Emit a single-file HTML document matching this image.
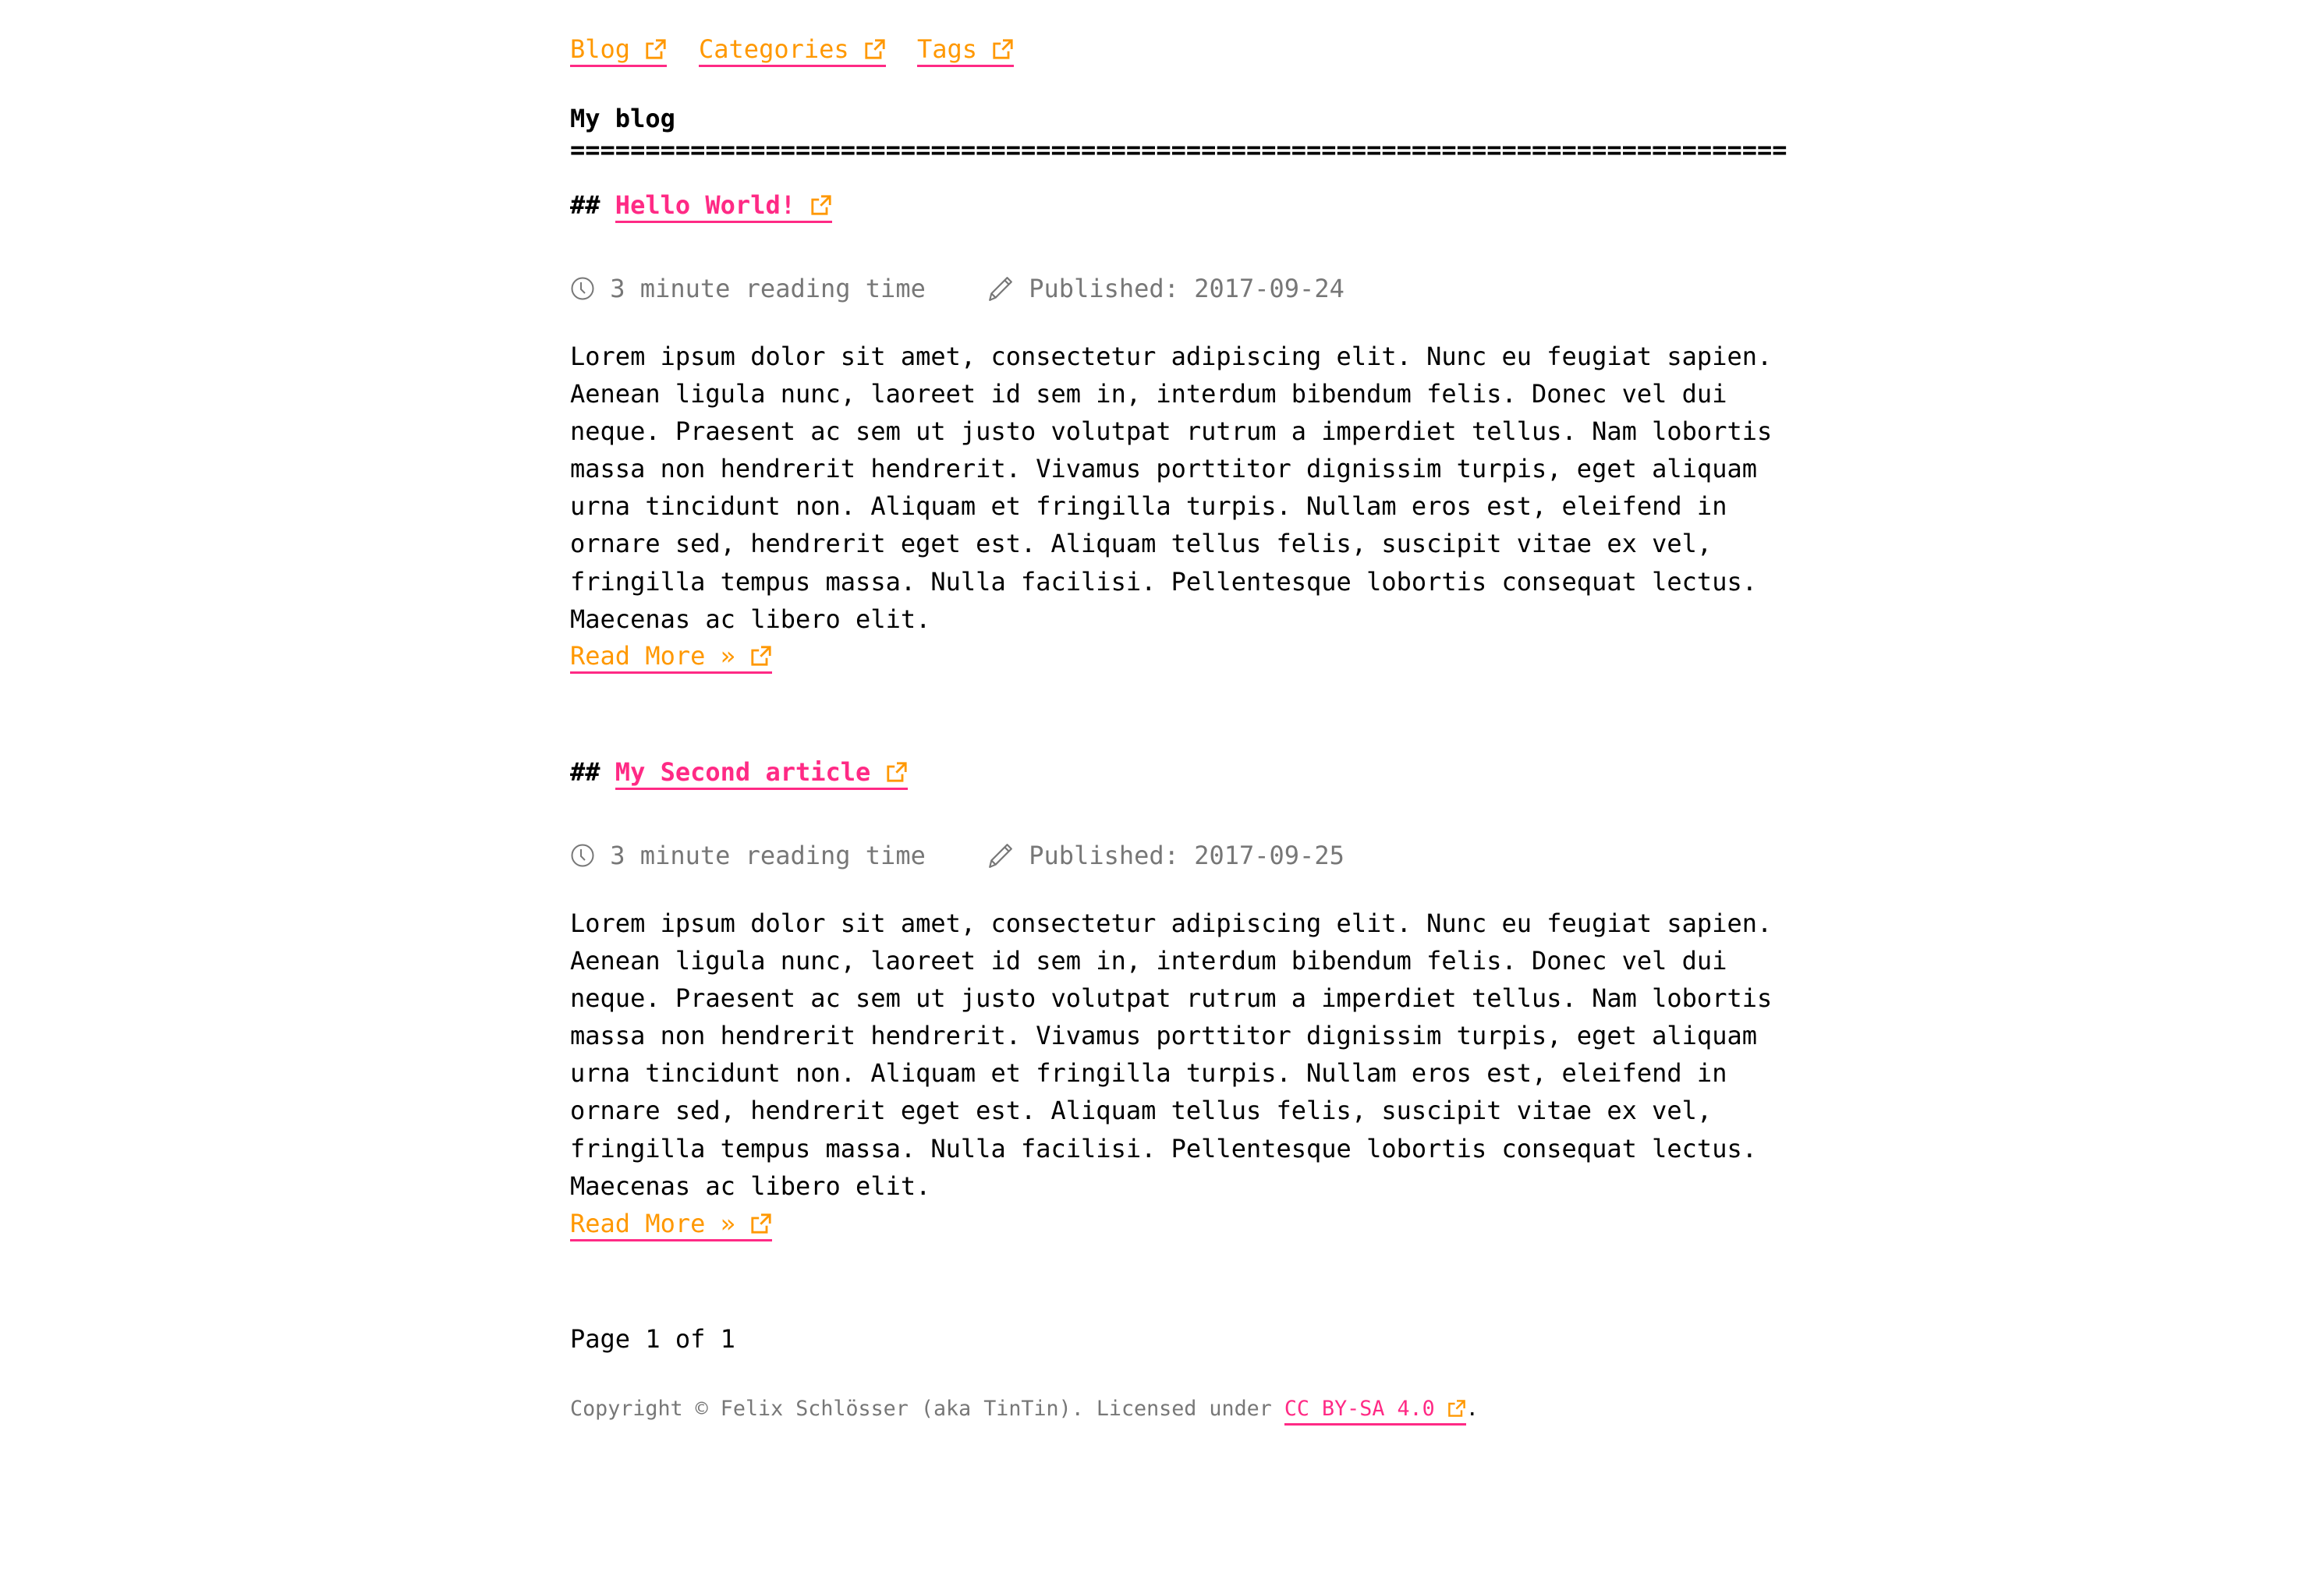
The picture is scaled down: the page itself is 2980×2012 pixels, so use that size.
<!DOCTYPE html>
<html><head><meta charset="utf-8">
<style>
html,body{margin:0;padding:0;background:#fff;}
body{width:2980px;height:2012px;position:relative;overflow:hidden;font-family:"DejaVu Sans Mono","Liberation Mono",monospace;font-size:32px;color:#000;}
.l{position:absolute;left:731px;white-space:pre;line-height:48px;}
.a{display:inline-block;line-height:40px;border-bottom:3px solid #ff2a85;text-decoration:none;}
.o{color:#ff9800;}
.p{color:#ff2a85;font-weight:bold;}
.g{color:#777;}
.ic{display:inline-block;vertical-align:-3px;}
.body{position:absolute;left:731px;line-height:48.1px;white-space:pre;}
</style></head><body>
<svg width="0" height="0" style="position:absolute"><defs>
<symbol id="ext" viewBox="0 0 20 20"><path d="M10 2h8v8M18 2l-8.5 8.5M15 12v6H2V5h6" fill="none" stroke="#ff9800" stroke-width="2"/></symbol>
</defs></svg>

<div class="l" style="top:39px"><span class="a o">Blog <svg class="ic" width="28" height="28"><use href="#ext"/></svg></span></div>
<div class="l" style="top:39px;left:896px"><span class="a o">Categories <svg class="ic" width="28" height="28"><use href="#ext"/></svg></span></div>
<div class="l" style="top:39px;left:1176px"><span class="a o">Tags <svg class="ic" width="28" height="28"><use href="#ext"/></svg></span></div>

<div class="l" style="top:128px;font-weight:bold">My blog</div>
<div class="l" style="top:168px;font-weight:bold">=================================================================================</div>

<div class="l" style="top:239px;font-weight:bold">## <span class="a p">Hello World! <svg class="ic" width="28" height="28"><use href="#ext"/></svg></span></div>

<div class="l g" style="top:346px"><svg class="ic" width="32" height="32" viewBox="0 0 32 32" style="vertical-align:-5px"><circle cx="16" cy="16" r="13.5" fill="none" stroke="#777" stroke-width="2"/><path d="M14 8v9l5 5" fill="none" stroke="#777" stroke-width="2"/></svg> 3 minute reading time</div>
<div class="l g" style="top:346px;left:1266px"><svg class="ic" width="34" height="34" viewBox="0 0 32 32" style="vertical-align:-6px"><path d="M3 30l2-8L24 3l5 5-19 19zM5 22l5 5M21 6l5 5" fill="none" stroke="#777" stroke-width="2" stroke-linejoin="round"/></svg> Published: 2017-09-24</div>

<div class="body" style="top:433px">Lorem ipsum dolor sit amet, consectetur adipiscing elit. Nunc eu feugiat sapien.
Aenean ligula nunc, laoreet id sem in, interdum bibendum felis. Donec vel dui
neque. Praesent ac sem ut justo volutpat rutrum a imperdiet tellus. Nam lobortis
massa non hendrerit hendrerit. Vivamus porttitor dignissim turpis, eget aliquam
urna tincidunt non. Aliquam et fringilla turpis. Nullam eros est, eleifend in
ornare sed, hendrerit eget est. Aliquam tellus felis, suscipit vitae ex vel,
fringilla tempus massa. Nulla facilisi. Pellentesque lobortis consequat lectus.
Maecenas ac libero elit.</div>
<div class="l" style="top:817px"><span class="a o">Read More » <svg class="ic" width="28" height="28"><use href="#ext"/></svg></span></div>

<div class="l" style="top:966px;font-weight:bold">## <span class="a p">My Second article <svg class="ic" width="28" height="28"><use href="#ext"/></svg></span></div>

<div class="l g" style="top:1073px"><svg class="ic" width="32" height="32" viewBox="0 0 32 32" style="vertical-align:-5px"><circle cx="16" cy="16" r="13.5" fill="none" stroke="#777" stroke-width="2"/><path d="M14 8v9l5 5" fill="none" stroke="#777" stroke-width="2"/></svg> 3 minute reading time</div>
<div class="l g" style="top:1073px;left:1266px"><svg class="ic" width="34" height="34" viewBox="0 0 32 32" style="vertical-align:-6px"><path d="M3 30l2-8L24 3l5 5-19 19zM5 22l5 5M21 6l5 5" fill="none" stroke="#777" stroke-width="2" stroke-linejoin="round"/></svg> Published: 2017-09-25</div>

<div class="body" style="top:1160px">Lorem ipsum dolor sit amet, consectetur adipiscing elit. Nunc eu feugiat sapien.
Aenean ligula nunc, laoreet id sem in, interdum bibendum felis. Donec vel dui
neque. Praesent ac sem ut justo volutpat rutrum a imperdiet tellus. Nam lobortis
massa non hendrerit hendrerit. Vivamus porttitor dignissim turpis, eget aliquam
urna tincidunt non. Aliquam et fringilla turpis. Nullam eros est, eleifend in
ornare sed, hendrerit eget est. Aliquam tellus felis, suscipit vitae ex vel,
fringilla tempus massa. Nulla facilisi. Pellentesque lobortis consequat lectus.
Maecenas ac libero elit.</div>
<div class="l" style="top:1545px"><span class="a o">Read More » <svg class="ic" width="28" height="28"><use href="#ext"/></svg></span></div>

<div class="l" style="top:1693px">Page 1 of 1</div>

<div class="l g" style="top:1787px;font-size:26.7px;line-height:40px">Copyright © Felix Schlösser (aka TinTin). Licensed under <span class="a" style="color:#ff2a85;line-height:36px">CC BY-SA 4.0 <svg class="ic" width="24" height="24"><use href="#ext"/></svg></span><span style="color:#000">.</span></div>
</body></html>
